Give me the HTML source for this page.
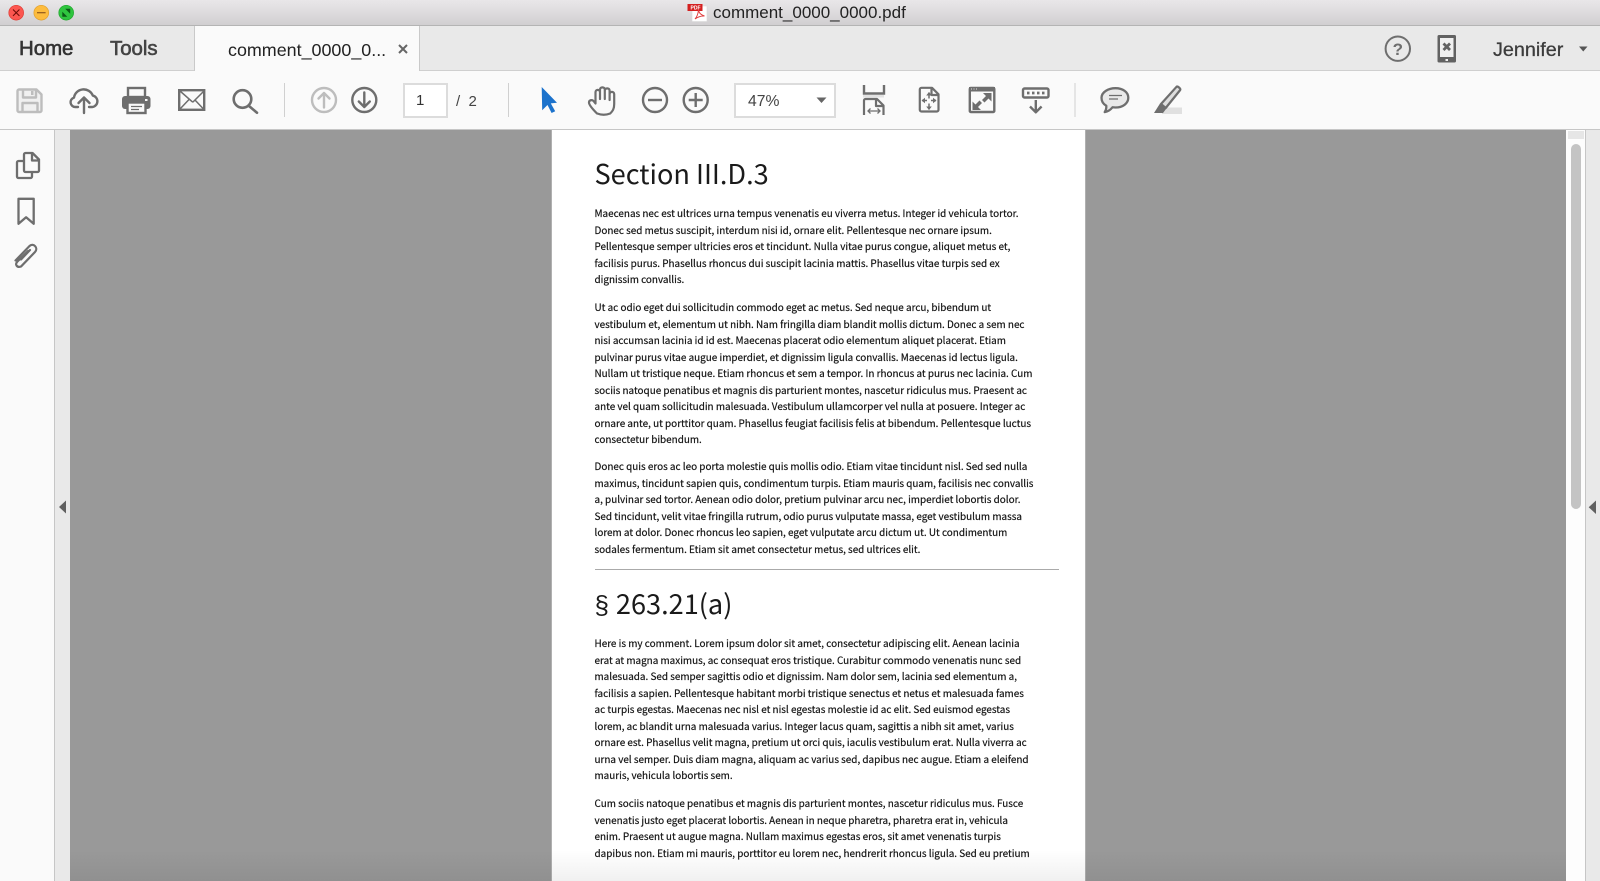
<!DOCTYPE html>
<html><head><meta charset="utf-8"><style>
*{box-sizing:border-box}
html,body{margin:0;padding:0;width:1600px;height:881px;overflow:hidden;background:#999;font-family:"Liberation Sans",sans-serif}
.a{position:absolute}
#title{left:0;top:0;width:1600px;height:26px;background:linear-gradient(#e9e7e9,#d1cfd1);border-bottom:1px solid #b4b4b4}
#tabs{left:0;top:26px;width:1600px;height:45px;background:#e9e9e9;border-bottom:1px solid #cfcfcf}
#tab{left:194px;top:26px;width:226px;height:45px;background:#fafafa;border-left:1px solid #c9c9c9;border-right:1px solid #c9c9c9}
#bar{left:0;top:71px;width:1600px;height:59px;background:#fafafa;border-bottom:1px solid #c6c6c6}
.t{white-space:nowrap;color:#333}
.box{background:#fff;border:2px solid #dcdcdc}
.pg{position:absolute;left:594.5px;white-space:nowrap;font-family:"Noto Sans CJK JP","Liberation Sans",sans-serif;font-size:9.91px;line-height:16.5px;color:#111;-webkit-text-stroke:.18px #111}
.h{position:absolute;left:594.5px;white-space:nowrap;font-family:"Noto Sans CJK JP","Liberation Sans",sans-serif;font-size:27.15px;line-height:40px;color:#1a1a1a}
</style></head><body>
<div class="a" id="title"></div>
<div class="a t" style="left:713px;top:3px;font-size:17px;line-height:20px;color:#222">comment_0000_0000.pdf</div>
<div class="a" id="tabs"></div>
<div class="a" id="tab"></div>
<div class="a t" style="left:19px;top:36.5px;font-size:20.4px;line-height:24px;-webkit-text-stroke:.6px #333">Home</div>
<div class="a t" style="left:110px;top:37px;font-size:20.4px;line-height:24px;color:#444;-webkit-text-stroke:.6px #444">Tools</div>
<div class="a t" style="left:228px;top:39px;font-size:17.9px;line-height:22px;color:#222">comment_0000_0...</div>
<div class="a t" style="left:1493px;top:38px;font-size:19.8px;line-height:24px;color:#3c3c3c;-webkit-text-stroke:.3px #3c3c3c">Jennifer</div>
<div class="a" id="bar"></div>
<div class="a box" style="left:403px;top:83px;width:45px;height:35px"></div>
<div class="a t" style="left:416px;top:91px;font-size:15px;line-height:20px;color:#333">1</div>
<div class="a t" style="left:456px;top:92px;font-size:15px;line-height:20px;color:#444">/&nbsp;&nbsp;2</div>
<div class="a box" style="left:734px;top:83px;width:102px;height:35px"></div>
<div class="a t" style="left:748px;top:92px;font-size:15.7px;line-height:20px;color:#444">47%</div>

<!-- viewer -->
<div class="a" style="left:0;top:130px;width:55px;height:751px;background:#fafafa;border-right:1px solid #c6c6c6"></div>
<div class="a" style="left:55px;top:130px;width:15px;height:751px;background:#e9e9e9"></div>
<div class="a" style="left:70px;top:130px;width:1496px;height:751px;background:#999"></div>
<div class="a" style="left:1566px;top:130px;width:19px;height:751px;background:#fdfdfd"></div>
<div class="a" style="left:1585px;top:130px;width:15px;height:751px;background:#e9e9e9;border-left:1px solid #c6c6c6"></div>
<div class="a" style="left:1568px;top:131px;width:16px;height:8px;background:#e6e6e6"></div>
<div class="a" style="left:1571px;top:144px;width:10px;height:365px;background:#c4c4c4;border-radius:5px"></div>
<div class="a" style="left:551px;top:130px;width:535px;height:751px;background:#fff;border-left:1px solid #b0b0b0;border-right:1px solid #b0b0b0"></div>

<div class="h" style="top:153px">Section III.D.3</div>
<div class="pg" style="top:205px">Maecenas nec est ultrices urna tempus venenatis eu viverra metus. Integer id vehicula tortor.<br>Donec sed metus suscipit, interdum nisi id, ornare elit. Pellentesque nec ornare ipsum.<br>Pellentesque semper ultricies eros et tincidunt. Nulla vitae purus congue, aliquet metus et,<br>facilisis purus. Phasellus rhoncus dui suscipit lacinia mattis. Phasellus vitae turpis sed ex<br>dignissim convallis.</div>
<div class="pg" style="top:299px">Ut ac odio eget dui sollicitudin commodo eget ac metus. Sed neque arcu, bibendum ut<br>vestibulum et, elementum ut nibh. Nam fringilla diam blandit mollis dictum. Donec a sem nec<br>nisi accumsan lacinia id id est. Maecenas placerat odio elementum aliquet placerat. Etiam<br>pulvinar purus vitae augue imperdiet, et dignissim ligula convallis. Maecenas id lectus ligula.<br>Nullam ut tristique neque. Etiam rhoncus et sem a tempor. In rhoncus at purus nec lacinia. Cum<br>sociis natoque penatibus et magnis dis parturient montes, nascetur ridiculus mus. Praesent ac<br>ante vel quam sollicitudin malesuada. Vestibulum ullamcorper vel nulla at posuere. Integer ac<br>ornare ante, ut porttitor quam. Phasellus feugiat facilisis felis at bibendum. Pellentesque luctus<br>consectetur bibendum.</div>
<div class="pg" style="top:458.4px">Donec quis eros ac leo porta molestie quis mollis odio. Etiam vitae tincidunt nisl. Sed sed nulla<br>maximus, tincidunt sapien quis, condimentum turpis. Etiam mauris quam, facilisis nec convallis<br>a, pulvinar sed tortor. Aenean odio dolor, pretium pulvinar arcu nec, imperdiet lobortis dolor.<br>Sed tincidunt, velit vitae fringilla rutrum, odio purus vulputate massa, eget vestibulum massa<br>lorem at dolor. Donec rhoncus leo sapien, eget vulputate arcu dictum ut. Ut condimentum<br>sodales fermentum. Etiam sit amet consectetur metus, sed ultrices elit.</div>
<div class="a" style="left:595px;top:569px;width:464px;height:1px;background:#aaa"></div>
<div class="h" style="top:583px"><span style="display:inline-block;width:21.4px;font-family:'Liberation Sans',sans-serif;font-size:26px">§</span>263.21(a)</div>
<div class="pg" style="top:635px">Here is my comment. Lorem ipsum dolor sit amet, consectetur adipiscing elit. Aenean lacinia<br>erat at magna maximus, ac consequat eros tristique. Curabitur commodo venenatis nunc sed<br>malesuada. Sed semper sagittis odio et dignissim. Nam dolor sem, lacinia sed elementum a,<br>facilisis a sapien. Pellentesque habitant morbi tristique senectus et netus et malesuada fames<br>ac turpis egestas. Maecenas nec nisl et nisl egestas molestie id ac elit. Sed euismod egestas<br>lorem, ac blandit urna malesuada varius. Integer lacus quam, sagittis a nibh sit amet, varius<br>ornare est. Phasellus velit magna, pretium ut orci quis, iaculis vestibulum erat. Nulla viverra ac<br>urna vel semper. Duis diam magna, aliquam ac varius sed, dapibus nec augue. Etiam a eleifend<br>mauris, vehicula lobortis sem.</div>
<div class="pg" style="top:795px">Cum sociis natoque penatibus et magnis dis parturient montes, nascetur ridiculus mus. Fusce<br>venenatis justo eget placerat lobortis. Aenean in neque pharetra, pharetra erat in, vehicula<br>enim. Praesent ut augue magna. Nullam maximus egestas eros, sit amet venenatis turpis<br>dapibus non. Etiam mi mauris, porttitor eu lorem nec, hendrerit rhoncus ligula. Sed eu pretium</div>
<div class="a" style="left:70px;top:850px;width:1496px;height:31px;background:linear-gradient(rgba(0,0,0,0),rgba(0,0,0,.06))"></div>

<svg class="a" style="left:0;top:0" width="1600" height="881" viewBox="0 0 1600 881" fill="none">
<!-- traffic lights -->
<circle cx="16.2" cy="12.7" r="7.4" fill="#fc5650" stroke="#df3d36" stroke-width=".7"/>
<path d="M13 9.5l6.4 6.4M19.4 9.5L13 15.9" stroke="#6d0b06" stroke-width="1"/>
<circle cx="41.3" cy="12.7" r="7.4" fill="#fdbc3e" stroke="#e0a030" stroke-width=".7"/>
<path d="M37 12.7h8.6" stroke="#90591d" stroke-width="1.2"/>
<circle cx="66.2" cy="12.7" r="7.4" fill="#2fc53f" stroke="#22a62e" stroke-width=".7"/>
<path d="M62.3 16.7v-5l5 5zM70.2 8.8v5l-5-5z" fill="#0c5a17"/>
<!-- pdf icon -->
<path d="M692 6h15v15.5h-15z" fill="#fff" stroke="#d8d8d8" stroke-width=".6"/>
<rect x="687.5" y="4" width="15" height="7" fill="#d42020"/>
<path d="M695 19c2-2 3-5 3.5-9 .5 3 2.5 5 6 6-3-.3-6 .5-9.5 3z" stroke="#e04040" stroke-width="1"/>
<text x="690.5" y="9.5" font-size="5" font-weight="bold" fill="#fff" font-family="Liberation Sans">PDF</text>
<!-- close, carets -->
<path d="M399 45l8 8M407 45l-8 8" stroke="#666" stroke-width="2"/>
<path d="M1579 46.500h8.500l-4.250 5z" fill="#555"/>
<path d="M816.500 97.500h10l-5 5.500z" fill="#666"/>
<!-- help -->
<circle cx="1397.800" cy="48.700" r="12.200" stroke="#6e6e6e" stroke-width="2"/>
<text x="1397.800" y="55" font-size="17" font-weight="bold" fill="#6e6e6e" text-anchor="middle" font-family="Liberation Sans">?</text>
<!-- phone -->
<rect x="1437.500" y="35" width="18.500" height="27.500" rx="1.500" fill="#626262"/>
<rect x="1440" y="38" width="13.500" height="19" fill="#f0f0f0"/>
<path d="M1443.500 43.500l6.500 6.500M1450 43.500l-6.500 6.500" stroke="#626262" stroke-width="2.800"/>
<rect x="1445.500" y="59" width="2.500" height="2" fill="#f0f0f0"/>

<!-- save -->
<g stroke="#bdbdbd" stroke-width="2.400" stroke-linejoin="round">
<path d="M19 89.500h17.500l5 5v16a1.500 1.500 0 0 1-1.500 1.500H19a1.500 1.500 0 0 1-1.500-1.500v-19.500a1.500 1.500 0 0 1 1.500-1.500z" fill="#f0f0f0"/>
<path d="M23 90v7.500h13V90M22.500 112v-9h15v9"/>
</g>
<rect x="31" y="91" width="2.500" height="4" fill="#bdbdbd"/>
<!-- upload -->
<g stroke="#6e6e6e" stroke-width="2.400" stroke-linecap="round" stroke-linejoin="round">
<path d="M78 107h-2.500a4.800 4.800 0 0 1-1.500-9.400 9.800 9.800 0 0 1 18.800-2 5.800 5.800 0 0 1-.3 11.400H89"/>
<path d="M84 113V97.500M78.500 103l5.500-5.500 5.500 5.500"/>
</g>
<!-- print -->
<rect x="122" y="96" width="28.500" height="13" rx="3" fill="#6e6e6e"/>
<rect x="128" y="88" width="17" height="9" fill="#fafafa" stroke="#6e6e6e" stroke-width="2.400"/>
<rect x="127.500" y="102.500" width="18" height="10.500" fill="#fafafa" stroke="#6e6e6e" stroke-width="2.400"/>
<path d="M131 106.500h11M131 109.500h8" stroke="#6e6e6e" stroke-width="1.200"/>
<rect x="145" y="99" width="2.500" height="2" fill="#fafafa"/>
<!-- mail -->
<g stroke="#6e6e6e">
<rect x="179.200" y="90.200" width="25" height="19.600" stroke-width="2.400"/>
<path d="M180 91l12 10.500a1 1 0 0 0 1.500 0L204 91M180 109l9-9.500M203.500 109l-9-9.500" stroke-width="1.500"/>
</g>
<!-- search -->
<g stroke="#6e6e6e" stroke-width="2.600" stroke-linecap="round">
<circle cx="242.500" cy="99" r="8.800"/><path d="M249 106l8 6.800"/>
</g>
<!-- seps -->
<path d="M284.500 83v34M508.500 83v34M1075 83v34" stroke="#d0d0d0" stroke-width="1"/>
<!-- prev/next -->
<g stroke="#bdbdbd" stroke-width="2.400" stroke-linecap="round" stroke-linejoin="round">
<circle cx="324" cy="100" r="12"/><path d="M324 107.500V93M318.500 98.500l5.500-5.500 5.500 5.500"/>
</g>
<g stroke="#6e6e6e" stroke-width="2.400" stroke-linecap="round" stroke-linejoin="round">
<circle cx="364.300" cy="100" r="12"/><path d="M364.300 92.500V107M358.800 101.500l5.500 5.500 5.500-5.500"/>
</g>
<!-- pointer -->
<path d="M541.700 87l15.300 15.800-6.200.6 4.400 7.800-3.600 1.800-4.100-8-5.300 5.200z" fill="#1b72cc"/>
<!-- hand -->
<path d="M597 113.500c-3-3-8-8-8-11 0-2.500 3-3 4.500-1.500l2 2.500V92c0-2.800 4.500-2.800 4.500 0v7V89.500c0-2.800 4.800-2.800 4.800 0V99v-8.500c0-2.800 4.800-2.800 4.800 0V100v-6c0-2.800 4.600-2.800 4.600 0v10c0 5-1.500 7-4 9.500-4 1.500-9 1.500-13 0z" stroke="#6e6e6e" stroke-width="2.200" stroke-linejoin="round"/>
<!-- zoom -->
<g stroke="#6e6e6e" stroke-width="2.400">
<circle cx="655" cy="100" r="12"/><path d="M648 100h14"/>
<circle cx="695.700" cy="100" r="12"/><path d="M688.700 100h14M695.700 93v14"/>
</g>
<!-- fit width -->
<path d="M864 85v8.500h20V85" stroke="#6e6e6e" stroke-width="2.400"/>
<rect x="863" y="95" width="21" height="2.500" fill="#e2e2e2"/>
<path d="M864 115v-14.500a1.500 1.500 0 0 1 1.500-1.500H877l6.500 6.500V115M876 99v7h7.500" stroke="#6e6e6e" stroke-width="2.200" stroke-linejoin="round"/>
<path d="M868 111h12M870.500 108.500l-2.500 2.500 2.500 2.500M877.500 108.500l2.500 2.500-2.500 2.500" stroke="#6e6e6e" stroke-width="1.300"/>
<!-- fit page -->
<path d="M921.500 87.800H932l6.500 6.500v15.500a1.700 1.700 0 0 1-1.700 1.700h-15.300a1.700 1.700 0 0 1-1.700-1.700v-20.300a1.700 1.700 0 0 1 1.700-1.700zM931.500 88v7H938" stroke="#6e6e6e" stroke-width="2.200" stroke-linejoin="round"/>
<path d="M929 92.500v6M929 103.500v6M922 100.500h5M931 100.500h5" stroke="#6e6e6e" stroke-width="1.500"/>
<path d="M926.200 95.500l2.800-3.500 2.800 3.500zM926.200 106.500l2.800 3.500 2.800-3.500zM925 97.700l-3.500 2.800 3.500 2.800zM933 97.700l3.500 2.800-3.500 2.800z" fill="#6e6e6e"/>
<!-- full screen -->
<rect x="969.800" y="88" width="24.500" height="24" rx="1" stroke="#6e6e6e" stroke-width="2.400"/>
<rect x="969" y="87" width="26" height="4.500" fill="#6e6e6e"/>
<path d="M971 89h1M973.500 89h1M976 89h1" stroke="#ddd" stroke-width="1"/>
<path d="M983 93h8.500v8.500l-3-3-4 4-2.500-2.500 4-4zM981 110h-8.500v-8.500l3 3 4-4 2.500 2.500-4 4z" fill="#6e6e6e"/>
<!-- read mode -->
<rect x="1023" y="88.500" width="25.500" height="9" rx="1.500" stroke="#6e6e6e" stroke-width="2.400"/>
<path d="M1027 93h2.500M1032 93h2.500M1037 93h2.500M1042 93h2.500" stroke="#6e6e6e" stroke-width="2.800"/>
<path d="M1035.800 100v12M1030 106.500l5.800 5.800 5.800-5.800" stroke="#6e6e6e" stroke-width="2.400" stroke-linejoin="round"/>
<!-- comment -->
<path d="M1115.500 88.200c7.200 0 12.800 3.900 12.800 9.600s-5.600 9.700-12.800 9.700c-1 0-2 0-3-.2-1.600 2-4 4.200-7.800 4.800 1-1.500 1.800-3.700 1.600-6.300-3-1.700-4.800-4.600-4.800-8 0-5.700 6.800-9.600 14-9.600z" fill="#e9e9e9" stroke="#6e6e6e" stroke-width="2.300" stroke-linejoin="round"/>
<path d="M1109 95.500h13M1109 99h9" stroke="#6e6e6e" stroke-width="1.300"/>
<!-- highlighter -->
<rect x="1162" y="107.500" width="20" height="6.500" fill="#e0e0e0"/>
<path d="M1161 104l15.500-17.200c1-1 4.500 1.800 3.700 3.200l-14.500 18z" fill="#dedede" stroke="#6e6e6e" stroke-width="2.200" stroke-linejoin="round"/>
<path d="M1160 103.500l6 5.500-3 4h-9z" fill="#6e6e6e"/>
<!-- left panel -->
<g stroke="#6e6e6e" stroke-width="2.300" stroke-linejoin="round">
<path d="M25 161h-6.500a1.500 1.500 0 0 0-1.500 1.500v14a1.500 1.500 0 0 0 1.500 1.500h12a1.500 1.500 0 0 0 1.500-1.500V172"/>
<path d="M25.500 153h7l6.500 6.500v11a1.500 1.500 0 0 1-1.500 1.500h-12a1.500 1.500 0 0 1-1.500-1.500v-16a1.500 1.500 0 0 1 1.500-1.500zM32 153v7.500h7"/>
<path d="M18.500 198.800h15.200v25l-7.600-6.500-7.600 6.500z"/>
</g>
<path d="M28 251l-10.500 10.500c-3 3-.5 6.500 3.500 5l14-14.500c3.700-4-1.500-9.500-5.500-6l-14 14.500M30 250l-9 9.500" stroke="#6e6e6e" stroke-width="2.200" stroke-linecap="round"/>
<!-- triangles -->
<path d="M66 500.500v13l-7-6.500z" fill="#606060"/>
<path d="M1596 500.500v13.500l-7.300-6.750z" fill="#606060"/>
</svg>
</body></html>
